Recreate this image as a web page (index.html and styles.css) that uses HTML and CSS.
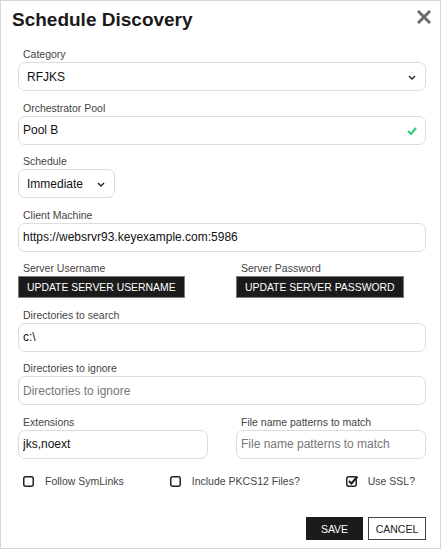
FILE: index.html
```html
<!DOCTYPE html>
<html lang="en">
<head>
    <meta charset="UTF-8">
    <meta name="viewport" content="width=device-width, initial-scale=1.0">
    <title>Schedule Discovery</title>
    <link rel="stylesheet" href="styles.css">
</head>
<body>
    <div class="dialog">
        <!-- header -->
        <div class="dialog-header">
            <h1 class="dialog-title">Schedule Discovery</h1>
            <button class="close-button" type="button" aria-label="Close">
                <svg width="14" height="14" viewBox="0 0 14 14">
                    <path d="M2 2 L12 12 M12 2 L2 12" stroke="#6b6b6b" stroke-width="3" stroke-linecap="square"/>
                </svg>
            </button>
        </div>

        <form class="dialog-body">
            <div class="field">
                <label class="field-label">Category</label>
                <div class="select-wrap">
                    <select class="field-select"><option>RFJKS</option></select>
                    <svg class="select-arrow" width="8" height="5" viewBox="0 0 8 5"><path d="M1 1 L4 4 L7 1" fill="none" stroke="#222" stroke-width="1.4"/></svg>
                </div>
            </div>

            <div class="field">
                <label class="field-label">Orchestrator Pool</label>
                <div class="input-wrap">
                    <input class="field-input" type="text" value="Pool B">
                    <svg class="valid-icon" width="10" height="8" viewBox="0 0 10 8"><path d="M1 4 L4 7 L9 1" fill="none" stroke="#2ecc71" stroke-width="2"/></svg>
                </div>
            </div>

            <div class="field">
                <label class="field-label">Schedule</label>
                <div class="select-wrap select-small">
                    <select class="field-select"><option>Immediate</option></select>
                    <svg class="select-arrow" width="8" height="5" viewBox="0 0 8 5"><path d="M1 1 L4 4 L7 1" fill="none" stroke="#222" stroke-width="1.4"/></svg>
                </div>
            </div>

            <div class="field">
                <label class="field-label">Client Machine</label>
                <input class="field-input" type="text" value="https://websrvr93.keyexample.com:5986">
            </div>

            <div class="field-row">
                <div class="field">
                    <label class="field-label">Server Username</label>
                    <div><button class="dark-button" type="button">UPDATE SERVER USERNAME</button></div>
                </div>
                <div class="field">
                    <label class="field-label">Server Password</label>
                    <div><button class="dark-button" type="button">UPDATE SERVER PASSWORD</button></div>
                </div>
            </div>

            <div class="field">
                <label class="field-label">Directories to search</label>
                <input class="field-input" type="text" value="c:\">
            </div>

            <div class="field">
                <label class="field-label">Directories to ignore</label>
                <input class="field-input" type="text" placeholder="Directories to ignore">
            </div>

            <div class="field-row">
                <div class="field">
                    <label class="field-label">Extensions</label>
                    <input class="field-input" type="text" value="jks,noext">
                </div>
                <div class="field">
                    <label class="field-label">File name patterns to match</label>
                    <input class="field-input" type="text" placeholder="File name patterns to match">
                </div>
            </div>

            <!-- options -->
            <div class="check-row">
                <label class="check-item">
                    <svg class="check-box" width="13" height="12" viewBox="0 0 13 12"><rect x="0.75" y="1.75" width="9.5" height="9.5" rx="2" fill="none" stroke="#222" stroke-width="1.5"/></svg>
                    <span>Follow SymLinks</span>
                </label>
                <label class="check-item">
                    <svg class="check-box" width="13" height="12" viewBox="0 0 13 12"><rect x="0.75" y="1.75" width="9.5" height="9.5" rx="2" fill="none" stroke="#222" stroke-width="1.5"/></svg>
                    <span>Include PKCS12 Files?</span>
                </label>
                <label class="check-item">
                    <svg class="check-box" width="13" height="12" viewBox="0 0 13 12"><rect x="0.75" y="1.75" width="9.5" height="9.5" rx="2" fill="none" stroke="#222" stroke-width="1.5"/><path d="M3 6 L5.5 8.5 L11.5 1.5" fill="none" stroke="#222" stroke-width="2.2"/></svg>
                    <span>Use SSL?</span>
                </label>
            </div>

            <div class="dialog-actions">
                <button class="save-button" type="button">SAVE</button>
                <button class="cancel-button" type="button">CANCEL</button>
            </div>
        </form>
    </div>
</body>
</html>
```

FILE: styles.css
```css
* {
    margin: 0;
    padding: 0;
    box-sizing: border-box;
}

body {
    font-family: "Liberation Sans", Arial, sans-serif;
    background: #fff;
    color: #333;
}

.dialog {
    width: 441px;
    height: 549px;
    border: 1px solid #d6d6d6;
    background: white;
}

.dialog-header {
    display: flex;
    justify-content: space-between;
    align-items: flex-start;
    padding: 7px 9px 0 11px;
    height: 46px;
}

.dialog-title {
    font-size: 19px;
    line-height: 24px;
    font-weight: bold;
    color: #1a1a1a;
}

.close-button {
    border: none;
    background: none;
    width: 14px;
    height: 14px;
    margin-top: 2px;
    cursor: pointer;
    display: flex;
}

.dialog-body {
    padding: 0 14px 0 17px;
}

.field {
    margin-bottom: 9.5px;
}

.field-label {
    display: block;
    font-size: 10.5px;
    line-height: 15px;
    color: #444;
    padding-left: 5px;
}

.field-input,
.field-select {
    display: block;
    width: 100%;
    height: 29px;
    border: 1px solid #dcdcdc;
    border-radius: 7px;
    background: white;
    font-family: inherit;
    font-size: 12px;
    color: #111;
    padding: 0 4px;
    outline: none;
}

.field-input::placeholder {
    color: #777;
}

.field-select {
    appearance: none;
    -webkit-appearance: none;
    padding-left: 8px;
}

.select-wrap,
.input-wrap {
    position: relative;
}

.select-small {
    width: 97px;
}

/* dropdown chevron over the select */
.select-arrow {
    position: absolute;
    right: 10px;
    top: 13px;
    pointer-events: none;
}

.valid-icon {
    position: absolute;
    right: 9px;
    top: 11px;
}

.field-row {
    display: grid;
    grid-template-columns: 1fr 1fr;
    column-gap: 28px;
}

.dark-button {
    height: 22px;
    padding: 0 8px;
    background: #1b1b1b;
    color: white;
    border: 1px solid #7a7a7a;
    font-family: inherit;
    font-size: 10.4px;
    cursor: pointer;
}

.check-row {
    display: flex;
    align-items: center;
    gap: 46px;
    height: 25px;
    padding-left: 5px;
    margin-bottom: 24px;
}

.check-item {
    display: flex;
    align-items: center;
    font-size: 10.5px;
    color: #444;
}

.check-box {
    margin-right: 9px;
}

.dialog-actions {
    display: flex;
    justify-content: flex-end;
    gap: 5px;
}

.save-button,
.cancel-button {
    height: 23px;
    font-family: inherit;
    font-size: 10.5px;
    cursor: pointer;
}

.save-button {
    width: 57px;
    background: #1b1b1b;
    color: white;
    border: none;
}

.cancel-button {
    width: 58px;
    background: white;
    color: #222;
    border: 1.5px solid #444;
}
```
